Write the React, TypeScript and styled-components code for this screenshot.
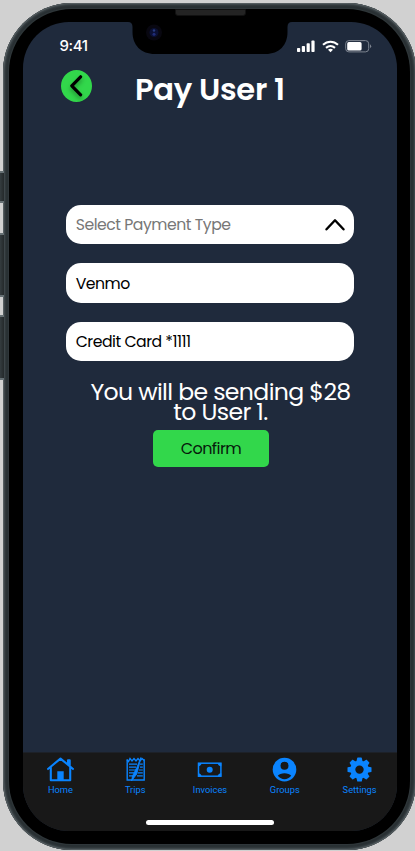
import React from 'react';
import styled, { createGlobalStyle } from 'styled-components';

const Global = createGlobalStyle`
  * { box-sizing: border-box; }
  body { margin: 0; background: #d1d1d1; overflow: hidden; }
`;

const Stage = styled.main`
  position: relative;
  width: 415px;
  height: 851px;
  padding: 3px 0 0 3px;
  overflow: hidden;
  background: #d1d1d1;
  font-family: Poppins, Inter, sans-serif;
`;

const SideButton = styled.i<{ $top: number; $height: number }>`
  position: absolute;
  left: 0;
  top: ${p => p.$top}px;
  width: 4px;
  height: ${p => p.$height}px;
  background: linear-gradient(90deg, #343c3f, #24292b);
  border-block: 2px solid #667074;
`;

const Frame = styled.div`
  width: 413px;
  height: 847px;
  padding: 6px;
  border-radius: 69px;
  background: #30383b;
  box-shadow: inset 0 0 0 1px #555d60, inset 0 0 2px 2px #454e52, inset 0 0 1px 5px #293033;
`;

const Bezel = styled.div`
  position: relative;
  width: 401px;
  height: 835px;
  padding: 13px 13px 14px 14px;
  border-radius: 63px;
  background: #000;
`;

const Speaker = styled.i`
  position: absolute;
  top: 0;
  left: 166px;
  width: 71px;
  height: 7px;
  border: 1px solid #111;
  border-radius: 0 0 3px 3px;
  background: #232323;
`;

const Screen = styled.div`
  display: flex;
  flex-direction: column;
  width: 374px;
  height: 809px;
  border-radius: 46px;
  overflow: hidden;
  background: #1f2a3c;
`;

const StatusBar = styled.header`
  display: grid;
  grid-template-columns: 109px 156px 109px;
  height: 48px;
`;

const Clock = styled.time`
  padding: 15px 0 0 36.6px;
  color: #fff;
  font: 500 15px/18px Inter, sans-serif;
  letter-spacing: -0.45px;
`;

const NotchSvg = styled.svg`
  display: block;
  margin-left: -4px;
`;

const Indicators = styled.div`
  display: flex;
  padding: 18px 0 0 9px;
  align-items: flex-start;
  gap: 6.5px;
`;

const Heading = styled.div`
  display: flex;
  height: 32px;
  padding-left: 38px;
  align-items: center;
`;

const BackButton = styled.button`
  width: 31px;
  height: 32px;
  padding: 0;
  border: 0;
  border-radius: 50%;
  background: #32d74b;
  svg { display: block; filter: drop-shadow(0 3px 2px #0005); }
`;

const Title = styled.h1`
  margin: 8px 0 0 43px;
  color: #fff;
  font-size: 30.6px;
  line-height: 40px;
  font-weight: 600;
  letter-spacing: -0.3px;
  white-space: nowrap;
`;

const Form = styled.section`
  display: flex;
  flex: 1;
  flex-direction: column;
  align-items: center;
  padding-top: 103px;
`;

const Options = styled.div`
  display: grid;
  width: 288px;
  gap: 19.2px;
`;

const Field = styled.div<{ $muted?: boolean }>`
  display: flex;
  height: 39.3px;
  padding: 0 9px 0 9.7px;
  align-items: center;
  justify-content: space-between;
  border-radius: 15px;
  background: #fff;
  color: ${p => (p.$muted ? '#777' : '#000')};
  font-size: 15.7px;
  font-weight: 400;
  letter-spacing: -0.48px;
`;

const Message = styled.p`
  margin: 21px 0 0 21px;
  color: #fff;
  font-size: 23.6px;
  font-weight: 400;
  line-height: 20px;
  letter-spacing: -0.62px;
  text-align: center;
  white-space: nowrap;
`;

const Confirm = styled.button`
  width: 116.5px;
  height: 37.5px;
  margin: 7.5px 0 0 2px;
  padding: 0;
  border: 0;
  border-radius: 5px;
  background: #32d74b;
  color: #071b0b;
  font: 400 16px Poppins, Inter, sans-serif;
  letter-spacing: -0.55px;
`;

const BottomBar = styled.footer`
  height: 79px;
  border-top: 1px solid #1d2128;
  background: #181818;
`;

const Tabs = styled.nav`
  display: grid;
  grid-template-columns: repeat(5, 74.8px);
  padding-top: 4px;
`;

const Tab = styled.div`
  display: flex;
  flex-direction: column;
  align-items: center;
  color: #0a84ff;
  font: 400 9.3px/10px Roboto, sans-serif;
  svg { display: block; margin-bottom: 1px; }
`;

const HomeIndicator = styled.div`
  width: 128px;
  height: 5px;
  margin: 25px auto 0;
  border-radius: 3px;
  background: #fff;
`;

const icons: Record<string, React.ReactNode> = {
  Home: <g fill="none" stroke="currentColor" strokeWidth="2.1" strokeLinejoin="round">
    <path d="M.3 12.5 13.5 1.6 26.7 12.5M3.8 10V23.2h19.4V10" />
    <path d="M21 7.5V3.2h1.7v5.5" />
    <path d="M10.3 14.2h6.4v9h-6.4z" fill="currentColor" stroke="none" />
  </g>,
  Trips: <g fill="none" stroke="currentColor" strokeWidth="1.4">
    <path d="M5.2 2.3V23h17V2.3" />
    <path d="m5 3 1.5 1.5L8 1.5l2 2.5L12 1.5l2 2.5L16 1.5l2 2.5L20 1.5l2.2 2" />
    <path d="M7 7.2h8m3 0h2.8M7 10.1h7m4 0h2.8M7 13h7m3 0h3.8M7 15.9h6m3 0h4.8M7 18.8h5m3 0h5.8" strokeWidth="1.2" />
    <path d="m18.8.5-1.5 7-2.5 9.5-5.3 7 1-5 4.5-9Z" fill="currentColor" strokeWidth="0.8" />
  </g>,
  Invoices: <g fill="none" stroke="currentColor">
    <rect x="2.5" y="6.2" width="22.4" height="13" strokeWidth="1.5" />
    <path d="M2 6h3.6c0 1.8-1.4 3.3-3.6 3.3ZM25.3 6h-3.6c0 1.8 1.4 3.3 3.6 3.3ZM2 19.5h3.6c0-1.8-1.4-3.3-3.6-3.3ZM25.3 19.5h-3.6c0-1.8 1.4-3.3 3.6-3.3Z" fill="currentColor" stroke="none" />
    <circle cx="13.7" cy="12.7" r="3" fill="currentColor" stroke="none" />
  </g>,
  Groups: <>
    <circle cx="13.5" cy="12.6" r="11.8" fill="currentColor" />
    <circle cx="13.5" cy="8.7" r="4" fill="#181818" />
    <path d="M6.8 18.8c2.1-3.5 11.3-3.5 13.4 0-3.8 4.6-9.6 4.6-13.4 0Z" fill="#181818" />
  </>,
  Settings: <g stroke="currentColor" fill="none">
    <circle cx="13.5" cy="12.6" r="6.7" strokeWidth="5" />
    {[0, 45, 90, 135, 180, 225, 270, 315].map(angle => (
      <path key={angle} d="M10.3 5 11.2.9q.1-.3.5-.3h3.6q.4 0 .5.3L16.7 5Z" fill="currentColor" stroke="none" transform={`rotate(${angle} 13.5 12.6)`} />
    ))}
  </g>,
};

export default function App() {
  return (
    <Stage>
      <Global />
      <SideButton $top={171} $height={32} />
      <SideButton $top={233} $height={64} />
      <SideButton $top={315} $height={65} />
      <Frame>
        <Bezel>
          <Speaker />
          <Screen>
            <StatusBar>
              <Clock>9:41</Clock>
              <NotchSvg width="164" height="33" viewBox="0 0 164 33">
                <path d="M0 0h164q-4.5 0-4.5 5v5c0 13-8 22-22 22H27C13 32 4.5 23 4.5 10V5Q4.5 0 0 0Z" fill="#000" />
                <circle cx="26" cy="10.5" r="8" fill="#080710" />
                <circle cx="26" cy="10.5" r="4.5" fill="#0b1034" />
                <circle cx="26" cy="8.5" r="1.2" fill="#263b7e" />
                <circle cx="26" cy="12.3" r="1.5" fill="#202c78" />
              </NotchSvg>
              <Indicators>
                <svg width="18" height="13" viewBox="0 0 18 13" fill="#fff">
                  <rect x="0" y="8" width="3.2" height="4" rx=".8" />
                  <rect x="4.8" y="6" width="3.2" height="6" rx=".8" />
                  <rect x="9.6" y="3.2" width="3.2" height="8.8" rx=".8" />
                  <rect x="14.4" y="0.6" width="3.2" height="11.4" rx=".8" />
                </svg>
                <svg width="17" height="13" viewBox="0 0 17 13" fill="none" stroke="#fff" strokeWidth="2.1">
                  <path d="M1 4.8c4.5-4.1 10.5-4.1 15 0M4 7.9c2.8-2.4 6.2-2.4 9 0" />
                  <path d="M6 9.8c1.6-1.3 3.4-1.3 5 0L8.5 12.3Z" fill="#fff" stroke="none" />
                </svg>
                <svg width="27" height="13" viewBox="0 0 27 13">
                  <rect x=".7" y=".6" width="23" height="11.3" rx="3.2" fill="none" stroke="#7d8490" />
                  <rect x="2.2" y="2.1" width="14.4" height="8.4" rx="1.6" fill="#fff" />
                  <path d="M25 4.3q2.4 1.8 0 4Z" fill="#7d8490" />
                </svg>
              </Indicators>
            </StatusBar>
            <Heading>
              <BackButton aria-label="Back">
                <svg width="31" height="32" viewBox="0 0 31 32"><path d="m19.6 6.8-8.8 9 8.8 9" fill="none" stroke="#000" strokeWidth="3.2" strokeLinecap="round" strokeLinejoin="round" /></svg>
              </BackButton>
              <Title>Pay User 1</Title>
            </Heading>
            <Form>
              <Options>
                <Field $muted>
                  Select Payment Type
                  <svg width="20" height="14" viewBox="0 0 20 14"><path d="m1.5 11.3 8.5-9 8.5 9" fill="none" stroke="#000" strokeWidth="2.4" strokeLinecap="round" strokeLinejoin="round" /></svg>
                </Field>
                <Field>Venmo</Field>
                <Field>Credit Card *1111</Field>
              </Options>
              <Message>You will be sending $28<br />to User 1.</Message>
              <Confirm>Confirm</Confirm>
            </Form>
            <BottomBar>
              <Tabs>
                {Object.entries(icons).map(([label, icon]) => (
                  <Tab key={label}>
                    <svg width="27" height="27" viewBox="0 0 27 27">{icon}</svg>
                    {label}
                  </Tab>
                ))}
              </Tabs>
              <HomeIndicator />
            </BottomBar>
          </Screen>
        </Bezel>
      </Frame>
    </Stage>
  );
}
